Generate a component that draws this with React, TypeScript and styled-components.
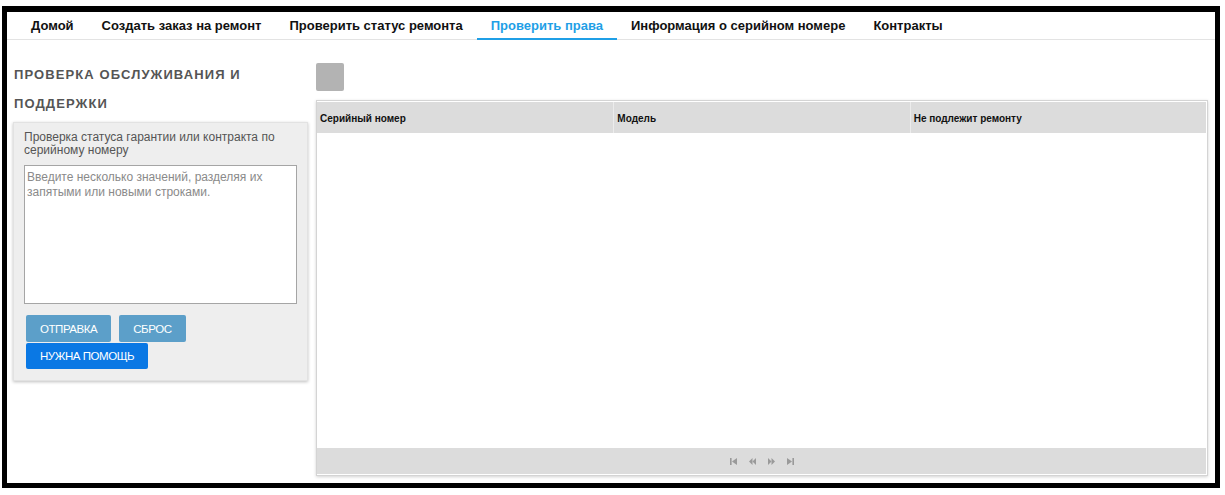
import React from 'react'
import styled, { createGlobalStyle } from 'styled-components'

const GlobalStyle = createGlobalStyle`
  html, body {
    margin: 0;
    padding: 0;
    background: #ffffff;
    font-family: "Liberation Sans", Arial, sans-serif;
  }
`

const Frame = styled.div`
  margin: 6px 0 0 2px;
  width: 1208px;
  height: 471px;
  border: 5px solid #000;
  border-top-width: 6px;
  display: flex;
  flex-direction: column;
  background: #fff;
`

const Nav = styled.nav`
  display: flex;
  height: 27px;
  padding-left: 10px;
  border-bottom: 1px solid #e3e3e3;
  flex-shrink: 0;
`

const NavItem = styled.a<{ $active?: boolean }>`
  display: flex;
  align-items: center;
  padding: 0 14px;
  font-size: 13px;
  font-weight: 700;
  color: ${p => (p.$active ? '#1f9fe6' : '#111')};
  text-decoration: none;
  border-bottom: 2px solid ${p => (p.$active ? '#1f9fe6' : 'transparent')};
  margin-bottom: -1px;
  padding-top: 1px;
  white-space: nowrap;
`

const Body = styled.div`
  flex: 1;
  display: flex;
  gap: 7px;
  padding: 0 7px 7px 6px;
  min-height: 0;
`

const Sidebar = styled.aside`
  width: 296px;
  flex-shrink: 0;
`

const Heading = styled.h2`
  margin: 20px 0 4px 1px;
  font-size: 13px;
  font-weight: 700;
  line-height: 29px;
  letter-spacing: 1.1px;
  color: #555;
  text-transform: uppercase;
`

const Panel = styled.div`
  width: 295px;
  box-sizing: border-box;
  background: #eeeeee;
  border: 1px solid #e2e2e2;
  box-shadow: 0 1px 3px rgba(0, 0, 0, 0.25);
  padding: 8px 10px 11px 10px;
`

const Hint = styled.p`
  margin: 0;
  font-size: 12px;
  line-height: 13px;
  color: #555;
`

const Input = styled.textarea`
  display: block;
  width: 273px;
  height: 139px;
  box-sizing: border-box;
  margin: 8px 0 11px 0;
  padding: 4px 2px;
  border: 1px solid #a5a5a5;
  background: #fff;
  font-family: "Liberation Sans", Arial, sans-serif;
  font-size: 12px;
  line-height: 15px;
  color: #333;
  resize: none;
  &::placeholder {
    color: #8a8a8a;
  }
`

const Buttons = styled.div`
  display: flex;
  flex-wrap: wrap;
  column-gap: 8px;
  row-gap: 1px;
  padding-left: 2px;
  width: 170px;
`

const Button = styled.button<{ $primary?: boolean }>`
  height: ${p => (p.$primary ? '26px' : '27px')};
  padding: 0 14px;
  border: none;
  border-radius: 2px;
  background: ${p => (p.$primary ? '#0a78e4' : '#5c9fc9')};
  color: #fff;
  font-family: "Liberation Sans", Arial, sans-serif;
  font-size: 11.5px;
  letter-spacing: -0.45px;
  text-transform: uppercase;
  cursor: pointer;
`

const Main = styled.section`
  flex: 1;
  display: flex;
  flex-direction: column;
  min-width: 0;
`

const Toolbar = styled.div`
  margin-top: 23px;
  margin-bottom: 9px;
`

const ToolButton = styled.div`
  width: 28px;
  height: 28px;
  border-radius: 2px;
  background: #b3b3b3;
`

const Grid = styled.div`
  flex: 1;
  display: flex;
  flex-direction: column;
  border: 1px solid #d4d4d4;
  box-shadow: 0 1px 3px rgba(0, 0, 0, 0.18);
  padding: 1px 1px 1px 0;
`

const HeaderRow = styled.div`
  display: grid;
  grid-template-columns: 1fr 1fr 1fr;
  height: 31px;
  background: #dcdcdc;
`

const HeaderCell = styled.div`
  display: flex;
  align-items: center;
  padding: 2px 0 0 3px;
  font-size: 10px;
  font-weight: 700;
  color: #111;
  border-left: 1px solid #ececec;
  &:first-child {
    border-left: none;
  }
`

const Rows = styled.div`
  flex: 1;
  background: #fff;
`

const Pager = styled.div`
  height: 25px;
  background: #dcdcdc;
  display: flex;
  align-items: center;
  justify-content: center;
  gap: 12px;
  padding-top: 1px;
`

const PagerIcon = styled.svg`
  width: 7px;
  height: 7px;
  fill: #9a9a9a;
`

function First() {
  return (
    <PagerIcon viewBox="0 0 7 7">
      <rect x="0" y="0" width="1.6" height="7" />
      <polygon points="7,0 2,3.5 7,7" />
    </PagerIcon>
  )
}

function Prev() {
  return (
    <PagerIcon viewBox="0 0 7 7">
      <polygon points="3.5,0 0,3.5 3.5,7" />
      <polygon points="7,0 3.5,3.5 7,7" />
    </PagerIcon>
  )
}

function Next() {
  return (
    <PagerIcon viewBox="0 0 7 7">
      <polygon points="0,0 3.5,3.5 0,7" />
      <polygon points="3.5,0 7,3.5 3.5,7" />
    </PagerIcon>
  )
}

function Last() {
  return (
    <PagerIcon viewBox="0 0 7 7">
      <polygon points="0,0 5,3.5 0,7" />
      <rect x="5.4" y="0" width="1.6" height="7" />
    </PagerIcon>
  )
}

const tabs = [
  'Домой',
  'Создать заказ на ремонт',
  'Проверить статус ремонта',
  'Проверить права',
  'Информация о серийном номере',
  'Контракты',
]

const columns = ['Серийный номер', 'Модель', 'Не подлежит ремонту']

export default function App() {
  return (
    <>
      <GlobalStyle />
      <Frame>
        <Nav>
          {tabs.map(t => (
            <NavItem key={t} href="#" $active={t === 'Проверить права'}>
              {t}
            </NavItem>
          ))}
        </Nav>
        <Body>
          <Sidebar>
            <Heading>Проверка обслуживания и поддержки</Heading>
            <Panel>
              <Hint>Проверка статуса гарантии или контракта по серийному номеру</Hint>
              <Input placeholder="Введите несколько значений, разделяя их запятыми или новыми строками." />
              <Buttons>
                <Button>Отправка</Button>
                <Button>Сброс</Button>
                <Button $primary>Нужна помощь</Button>
              </Buttons>
            </Panel>
          </Sidebar>
          <Main>
            <Toolbar>
              <ToolButton />
            </Toolbar>
            <Grid>
              <HeaderRow>
                {columns.map(c => (
                  <HeaderCell key={c}>{c}</HeaderCell>
                ))}
              </HeaderRow>
              <Rows />
              <Pager>
                <First />
                <Prev />
                <Next />
                <Last />
              </Pager>
            </Grid>
          </Main>
        </Body>
      </Frame>
    </>
  )
}
